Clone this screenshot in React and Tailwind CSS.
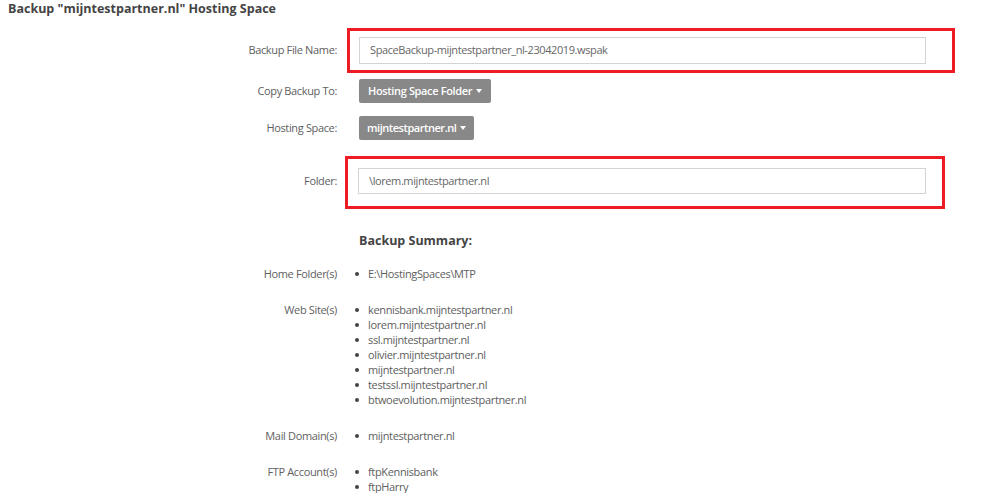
import React from "react";

const font = { fontFamily: "'Open Sans', 'Noto Sans', sans-serif" };

const sites = [
  "kennisbank.mijntestpartner.nl",
  "lorem.mijntestpartner.nl",
  "ssl.mijntestpartner.nl",
  "olivier.mijntestpartner.nl",
  "mijntestpartner.nl",
  "testssl.mijntestpartner.nl",
  "btwoevolution.mijntestpartner.nl",
];

function Label({ children }) {
  return (
    <div className="w-[337px] shrink-0 text-right text-[11px] tracking-[-0.35px] text-[#606060]">{children}</div>
  );
}

function Caret() {
  return <span className="ml-1 inline-block border-x-[3.5px] border-t-[4px] border-x-transparent border-t-white align-middle" />;
}

function Summary({ label, items }) {
  return (
    <div className="flex items-start leading-[15px]">
      <Label>{label}</Label>
      <ul className="ml-[18px]">
        {items.map((it) => (
          <li key={it} className="flex items-center text-[11px] tracking-[-0.35px] text-[#606060]">
            <span className="mr-[9px] h-[4px] w-[4px] rounded-full bg-[#444]" />
            {it}
          </li>
        ))}
      </ul>
    </div>
  );
}

export default function App() {
  return (
    <div style={font} className="h-[493px] w-[1000px] overflow-hidden bg-white">
      <h1 className="pl-[8px] pt-[1px] text-[12.5px] font-bold leading-[16px] text-[#444]">
        Backup "mijntestpartner.nl" Hosting Space
      </h1>

      {/* backup file name */}
      <div className="mt-[11px] flex h-[45px] items-center">
        <Label>Backup File Name:</Label>
        <div className="relative ml-[22px]">
          <div className="flex h-[27px] w-[567px] items-center border border-[#d4d4d4] px-[10px] text-[11px] tracking-[-0.4px] text-[#666]">
            SpaceBackup-mijntestpartner_nl-23042019.wspak
          </div>
          <div className="pointer-events-none absolute -bottom-[9px] -left-[12px] -right-[29px] -top-[9px] border-[3px] border-[#ed1c24]" />
        </div>
      </div>

      {/* copy backup to */}
      <div className="mt-[6px] flex h-[24px] items-center">
        <Label>Copy Backup To:</Label>
        <div className="ml-[22px] flex h-[24px] items-center rounded-[2px] bg-[#888] px-[9px] text-[11px] font-semibold tracking-[-0.35px] text-white">
          Hosting Space Folder
          <Caret />
        </div>
      </div>

      <div className="mt-[13px] flex h-[24px] items-center">
        <Label>Hosting Space:</Label>
        <div className="ml-[22px] flex h-[24px] items-center rounded-[2px] bg-[#888] px-[8px] text-[11px] font-semibold tracking-[-0.45px] text-white">
          mijntestpartner.nl
          <Caret />
        </div>
      </div>

      {/* folder */}
      <div className="mt-[28px] flex h-[26px] items-center">
        <Label>Folder:</Label>
        <div className="relative ml-[21px]">
          <div className="flex h-[26px] w-[568px] items-center border border-[#d4d4d4] px-[10px] text-[11px] tracking-[-0.4px] text-[#666]">
            \lorem.mijntestpartner.nl
          </div>
          <div className="pointer-events-none absolute -bottom-[15px] -left-[13px] -right-[19px] -top-[12px] border-[3px] border-[#ed1c24]" />
        </div>
      </div>

      <div className="ml-[359px] mt-[39px] text-[12.5px] font-bold leading-[16px] text-[#444]">
        Backup Summary:
      </div>

      <div className="mt-[17px] flex flex-col gap-[21px]">
        <Summary label="Home Folder(s)" items={["E:\\HostingSpaces\\MTP"]} />
        <Summary label="Web Site(s)" items={sites} />
        <Summary label="Mail Domain(s)" items={["mijntestpartner.nl"]} />
        <Summary label="FTP Account(s)" items={["ftpKennisbank", "ftpHarry"]} />
      </div>
    </div>
  );
}
